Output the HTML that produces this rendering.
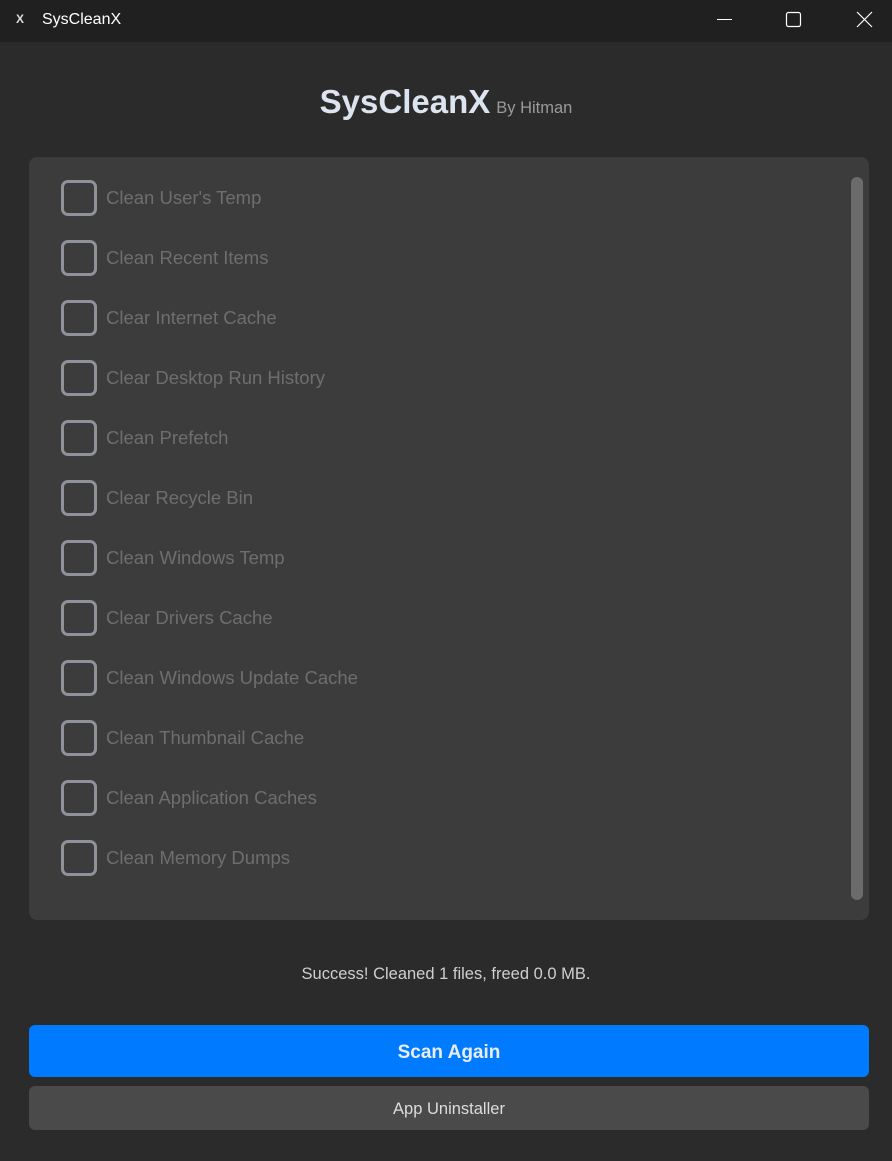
<!DOCTYPE html>
<html><head><meta charset="utf-8"><style>
*{margin:0;padding:0;box-sizing:border-box}
body{width:892px;height:1161px;background:#2b2b2b;font-family:"Liberation Sans",sans-serif;position:relative;overflow:hidden}
.tb{position:absolute;left:0;top:0;width:892px;height:42px;background:#202020}
.tb .t{position:absolute;left:42px;top:11px;color:#fff;font-size:16px}
.tb .ic{position:absolute;left:16px;top:12px;color:#ddd;font-size:12px;font-weight:bold}
.h{position:absolute;top:83px;left:0;width:892px;text-align:center}
.h b{font-size:33px;color:#dce4f0}
.h span{font-size:16.5px;color:#9a9a9a;margin-left:6px}
.panel{position:absolute;left:29px;top:157px;width:840px;height:763px;background:#3c3c3c;border-radius:8px}
.sb{position:absolute;left:822px;top:20px;width:12px;height:723px;background:#6b6b6b;border-radius:6px}
.row{position:absolute;left:32px;height:36px;display:flex;align-items:center}
.cb{width:36px;height:36px;border:3px solid #8f9298;border-radius:7px;margin-right:9px}
.row span{color:#6e6e6e;font-size:18.5px}
.st{position:absolute;top:965px;width:892px;text-align:center;color:#cfcfcf;font-size:16.5px}
.b1{position:absolute;left:29px;top:1025px;width:840px;height:52px;background:#007aff;border-radius:6px;color:#e8eef8;font-weight:bold;font-size:19px;text-align:center;line-height:56px}
.b2{position:absolute;left:29px;top:1086px;width:840px;height:44px;background:#4a4a4a;border-radius:6px;color:#dcdcdc;font-size:16.5px;text-align:center;line-height:46px}
</style></head><body>
<div class="tb"><div class="ic">X</div><div class="t">SysCleanX</div>
<svg style="position:absolute;left:700px;top:0" width="192" height="42"><line x1="17" y1="19.5" x2="32" y2="19.5" stroke="#fff" stroke-width="1"/><rect x="86.5" y="12.5" width="14" height="14" rx="2" fill="none" stroke="#fff" stroke-width="1.2"/><path d="M157 12L172 27M172 12L157 27" stroke="#fff" stroke-width="1.2"/></svg></div>
<div class="h"><b>SysCleanX</b><span>By Hitman</span></div>
<div class="panel"><div class="sb"></div>
<div class="row" style="top:23px"><div class="cb"></div><span>Clean User's Temp</span></div>
<div class="row" style="top:83px"><div class="cb"></div><span>Clean Recent Items</span></div>
<div class="row" style="top:143px"><div class="cb"></div><span>Clear Internet Cache</span></div>
<div class="row" style="top:203px"><div class="cb"></div><span>Clear Desktop Run History</span></div>
<div class="row" style="top:263px"><div class="cb"></div><span>Clean Prefetch</span></div>
<div class="row" style="top:323px"><div class="cb"></div><span>Clear Recycle Bin</span></div>
<div class="row" style="top:383px"><div class="cb"></div><span>Clean Windows Temp</span></div>
<div class="row" style="top:443px"><div class="cb"></div><span>Clear Drivers Cache</span></div>
<div class="row" style="top:503px"><div class="cb"></div><span>Clean Windows Update Cache</span></div>
<div class="row" style="top:563px"><div class="cb"></div><span>Clean Thumbnail Cache</span></div>
<div class="row" style="top:623px"><div class="cb"></div><span>Clean Application Caches</span></div>
<div class="row" style="top:683px"><div class="cb"></div><span>Clean Memory Dumps</span></div>
</div>
<div class="st">Success! Cleaned 1 files, freed 0.0 MB.</div>
<div class="b1">Scan Again</div>
<div class="b2">App Uninstaller</div>
</body></html>
